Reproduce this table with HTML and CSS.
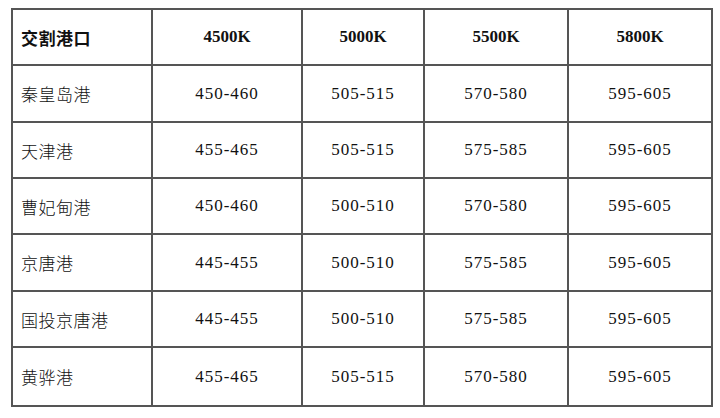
FILE: index.html
```html
<!DOCTYPE html>
<html lang="zh">
<head>
<meta charset="utf-8">
<title>交割港口</title>
<link rel="stylesheet" href="styles.css">
</head>
<body>
<div class="grid">
  <div class="cell port head">交割港口</div>
  <div class="cell num head">4500K</div>
  <div class="cell num head">5000K</div>
  <div class="cell num head">5500K</div>
  <div class="cell num head">5800K</div>

  <div class="cell port">秦皇岛港</div>
  <div class="cell num">450-460</div>
  <div class="cell num">505-515</div>
  <div class="cell num">570-580</div>
  <div class="cell num">595-605</div>

  <div class="cell port">天津港</div>
  <div class="cell num">455-465</div>
  <div class="cell num">505-515</div>
  <div class="cell num">575-585</div>
  <div class="cell num">595-605</div>

  <div class="cell port">曹妃甸港</div>
  <div class="cell num">450-460</div>
  <div class="cell num">500-510</div>
  <div class="cell num">570-580</div>
  <div class="cell num">595-605</div>

  <div class="cell port">京唐港</div>
  <div class="cell num">445-455</div>
  <div class="cell num">500-510</div>
  <div class="cell num">575-585</div>
  <div class="cell num">595-605</div>

  <div class="cell port">国投京唐港</div>
  <div class="cell num">445-455</div>
  <div class="cell num">500-510</div>
  <div class="cell num">575-585</div>
  <div class="cell num">595-605</div>

  <div class="cell port">黄骅港</div>
  <div class="cell num">455-465</div>
  <div class="cell num">505-515</div>
  <div class="cell num">570-580</div>
  <div class="cell num">595-605</div>
</div>
</body>
</html>
```

FILE: styles.css
```css
html, body {
  margin: 0;
  background: #ffffff;
}

body {
  padding: 8px 0 0 11px;
  font-family: "Noto Sans CJK SC", "Noto Sans", sans-serif;
  color: #111;
}

.grid {
  display: grid;
  grid-template-columns: 140px 150px 122px 144px 144px;
  grid-template-rows: 56px 57px 56px 56px 57px 56px 59px;
  width: max-content;
  border-left: 2px solid #555;
  border-top: 2px solid #555;
}

.cell {
  box-sizing: border-box;
  border-right: 2px solid #555;
  border-bottom: 2px solid #555;
  display: flex;
  align-items: center;
}

.port {
  padding-left: 8px;
  font-size: 17px;
  font-weight: 300;
  letter-spacing: 0.5px;
}

.port.head {
  font-weight: 700;
}

.num {
  justify-content: center;
  font-family: "Liberation Serif", "DejaVu Serif", serif;
  font-size: 17px;
  letter-spacing: 1px;
}

.num.head {
  font-weight: 700;
  letter-spacing: 0;
}
```
